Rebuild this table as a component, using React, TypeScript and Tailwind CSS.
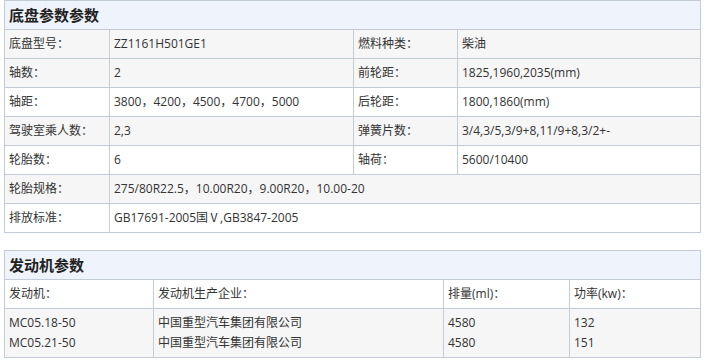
const font = { fontFamily: '"Open Sans", "Noto Sans CJK SC", sans-serif' };

type Row = { cells: string[]; gray: boolean };

const chassisRows: Row[] = [
  { cells: ["底盘型号：", "ZZ1161H501GE1", "燃料种类：", "柴油"], gray: true },
  { cells: ["轴数：", "2", "前轮距：", "1825,1960,2035(mm)"], gray: true },
  { cells: ["轴距：", "3800，4200，4500，4700，5000", "后轮距：", "1800,1860(mm)"], gray: false },
  { cells: ["驾驶室乘人数：", "2,3", "弹簧片数：", "3/4,3/5,3/9+8,11/9+8,3/2+-"], gray: true },
  { cells: ["轮胎数：", "6", "轴荷：", "5600/10400"], gray: false },
];

const cell = "border-r border-b border-[#c3cbd6] px-[4px] flex items-center";

function Title({ text }: { text: string }) {
  return (
    <div className={`${cell} col-span-4 h-[29px] bg-[#eff4fc]`}>
      <span className="font-bold text-[15px] text-[#222]">{text}</span>
    </div>
  );
}

function ChassisTable() {
  return (
    <div className="ml-[4px] w-[697px] grid grid-cols-[105px_244px_104px_243px] border-t border-l border-[#c3cbd6]">
      <Title text="底盘参数参数" />
      {chassisRows.map((r, i) =>
        r.cells.map((c, j) => (
          <div key={`${i}-${j}`} className={`${cell} h-[29px] ${r.gray ? "bg-[#f6f6f6]" : "bg-white"}`}>
            {c}
          </div>
        ))
      )}
      <div className={`${cell} h-[29px] bg-[#f6f6f6]`}>轮胎规格：</div>
      <div className={`${cell} col-span-3 h-[29px] bg-[#f6f6f6]`}>
        275/80R22.5，10.00R20，9.00R20，10.00-20
      </div>
      <div className={`${cell} h-[29px] bg-white`}>排放标准：</div>
      <div className={`${cell} col-span-3 h-[29px] bg-white`}>GB17691-2005国Ⅴ,GB3847-2005</div>
    </div>
  );
}

function EngineTable() {
  const head = ["发动机：", "发动机生产企业：", "排量(ml)：", "功率(kw)："];
  const data = [
    ["MC05.18-50", "MC05.21-50"],
    ["中国重型汽车集团有限公司", "中国重型汽车集团有限公司"],
    ["4580", "4580"],
    ["132", "151"],
  ];
  return (
    <div className="mt-[17px] ml-[4px] w-[697px] grid grid-cols-[149px_290px_126px_131px] border-t border-l border-[#c3cbd6]">
      <Title text="发动机参数" />
      {head.map((h) => (
        <div key={h} className={`${cell} h-[29px] bg-white`}>
          {h}
        </div>
      ))}
      {data.map((col, i) => (
        <div key={i} className={`${cell} h-[49px] bg-[#f6f6f6] flex-col items-start justify-center leading-[20px]`}>
          {col.map((v, k) => (
            <div key={k}>{v}</div>
          ))}
        </div>
      ))}
    </div>
  );
}

export default function App() {
  return (
    <div className="w-[705px] h-[361px] bg-white text-[12px] text-[#333]" style={font}>
      <ChassisTable />
      <EngineTable />
    </div>
  );
}
